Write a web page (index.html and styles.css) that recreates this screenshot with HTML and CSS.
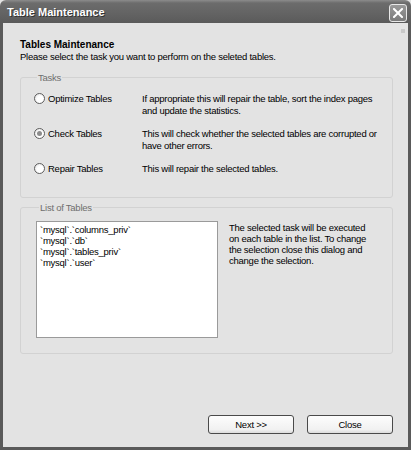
FILE: index.html
```html
<!DOCTYPE html>
<html lang="en">
<head>
  <meta charset="UTF-8">
  <title>Table Maintenance</title>
  <link rel="stylesheet" href="styles.css">
</head>
<body>
  <div class="window">
    <div class="titlebar">
      <span class="title">Table Maintenance</span>
      <button class="close-btn" title="Close">
        <svg width="10" height="10" viewBox="0 0 10 10">
          <path d="M1 1 L9 9 M9 1 L1 9" stroke="#fff" stroke-width="2" stroke-linecap="square"/>
        </svg>
      </button>
    </div>

    <div class="body">
      <span class="grip"></span>
      <h1>Tables Maintenance</h1>
      <p class="intro">Please select the task you want to perform on the seleted tables.</p>

      <fieldset class="group tasks">
        <legend>Tasks</legend>
        <label class="task">
          <span class="radio"></span>
          <span class="task-name">Optimize Tables</span>
          <span class="task-desc">If appropriate this will repair the table, sort the index pages and update the statistics.</span>
        </label>
        <label class="task">
          <span class="radio checked"></span>
          <span class="task-name">Check Tables</span>
          <span class="task-desc">This will check whether the selected tables are corrupted or have other errors.</span>
        </label>
        <label class="task">
          <span class="radio"></span>
          <span class="task-name">Repair Tables</span>
          <span class="task-desc">This will repair the selected tables.</span>
        </label>
      </fieldset>

      <fieldset class="group tables">
        <legend>List of Tables</legend>
        <div class="listbox">
          <div>`mysql`.`columns_priv`</div>
          <div>`mysql`.`db`</div>
          <div>`mysql`.`tables_priv`</div>
          <div>`mysql`.`user`</div>
        </div>
        <p class="note">The selected task will be executed on each table in the list. To change the selection close this dialog and change the selection.</p>
      </fieldset>

      <div class="buttons">
        <button class="btn">Next &gt;&gt;</button>
        <button class="btn">Close</button>
      </div>
    </div>
  </div>
</body>
</html>
```

FILE: styles.css
```css
* {
  box-sizing: border-box;
}
body {
  margin: 0;
  font-family: "Liberation Sans", Arial, sans-serif;
  font-size: 9.5px;
  letter-spacing: -0.25px;
  color: #000;
  background: #e3e3e3;
}
.window {
  width: 411px;
  height: 450px;
  display: flex;
  flex-direction: column;
}
.titlebar {
  height: 23px;
  flex: none;
  display: flex;
  align-items: center;
  justify-content: space-between;
  padding: 0 4px 0 7px;
  background: linear-gradient(#8c8c8c 0, #6c6c6c 3px, #636363 60%, #5a5a5a 100%);
  border-radius: 6px 6px 0 0;
}
.title {
  color: #fff;
  font-weight: bold;
  font-size: 11px;
  letter-spacing: 0;
  text-shadow: 1px 1px 0 #333;
}
.close-btn {
  width: 18px;
  height: 18px;
  margin-top: 2px;
  padding: 0;
  border: 1px solid #e8e8e8;
  border-radius: 3px;
  background: linear-gradient(#9a9a9a, #7a7a7a);
  display: flex;
  align-items: center;
  justify-content: center;
}
.body {
  flex: 1;
  position: relative;
  padding: 16px 15px 0 17px;
  border: 3px solid #5a5a5a;
  border-top: none;
  background: #e3e3e3;
  display: flex;
  flex-direction: column;
}
.grip {
  position: absolute;
  top: 6px;
  right: 3px;
  width: 4px;
  height: 4px;
  background: #c9c9c9;
}
h1 {
  margin: 0;
  font-size: 10px;
  line-height: 12px;
  font-weight: bold;
  letter-spacing: 0;
}
.intro {
  margin: 0 0 8px;
  line-height: 12px;
}
.group {
  margin: 0;
  border: 1px solid #d2d2d2;
  border-radius: 3px;
  min-width: 0;
}
.group legend {
  color: #6e6e6e;
  padding: 0 1px;
  margin-left: 3px;
  line-height: 13px;
}
.tasks {
  padding: 9px 8px 22px 13px;
  display: flex;
  flex-direction: column;
  gap: 11px;
}
.task {
  display: flex;
  align-items: flex-start;
  line-height: 12px;
}
.radio {
  width: 11px;
  height: 11px;
  flex: none;
  border: 1px solid #5e5e5e;
  border-radius: 50%;
  background: radial-gradient(circle at 60% 60%, #fff 40%, #dcdcdc 100%);
  display: flex;
  align-items: center;
  justify-content: center;
}
.radio.checked::after {
  content: "";
  width: 5px;
  height: 5px;
  border-radius: 50%;
  background: #8c8c8c;
}
.task-name {
  width: 97px;
  flex: none;
  padding-left: 3px;
}
.task-desc {
  width: 240px;
}
.tables {
  margin-top: 3px;
  padding: 7px 15px 15px 15px;
  display: flex;
  gap: 11px;
}
.listbox {
  width: 182px;
  height: 117px;
  flex: none;
  background: #fff;
  border: 1px solid #9a9a9a;
  padding: 2px 3px;
  line-height: 11px;
}
.note {
  margin: 1px 0 0;
  line-height: 11px;
  width: 150px;
}
.buttons {
  margin-top: auto;
  margin-bottom: 13px;
  display: flex;
  justify-content: flex-end;
  gap: 13px;
}
.btn {
  width: 86px;
  height: 19px;
  padding: 0;
  font-family: inherit;
  font-size: 9.5px;
  letter-spacing: -0.25px;
  color: #000;
  border: 1px solid #4a4a4a;
  border-radius: 3px;
  background: linear-gradient(#fdfdfd, #f1f1f1 80%, #dcdcdc);
}
```
